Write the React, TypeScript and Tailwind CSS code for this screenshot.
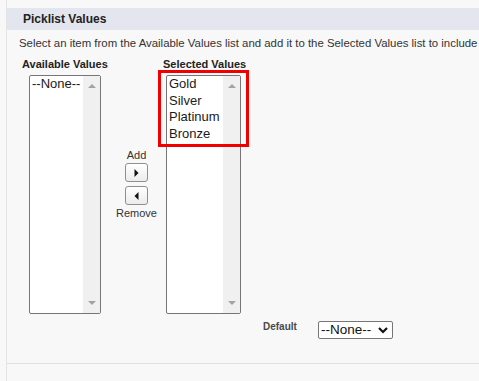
const font = { fontFamily: '"Liberation Sans", Arial, sans-serif' };

function Arrow({ dir }: { dir: "up" | "down" }) {
  return (
    <svg width="8" height="4" viewBox="0 0 8 4" className="block">
      {dir === "up" ? (
        <polygon points="0,4 8,4 4,0" fill="#a3a3a3" />
      ) : (
        <polygon points="0,0 8,0 4,4" fill="#a3a3a3" />
      )}
    </svg>
  );
}

function ListBox({ items, width }: { items: string[]; width: string }) {
  return (
    <div
      className={`flex h-[239px] ${width} overflow-hidden rounded-[2px] border border-[#767676] bg-white`}
    >
      <div className="flex-1 pl-[2px] text-[13px] leading-[16.7px] text-[#1a1a1a]">
        {items.map((it) => (
          <div key={it} className="whitespace-nowrap">
            {it}
          </div>
        ))}
      </div>
      <div className="flex w-[17px] flex-col items-center justify-between bg-[#f0f0f0] pt-[8px] pb-[8px]">
        <Arrow dir="up" />
        <Arrow dir="down" />
      </div>
    </div>
  );
}

function MoveButton({ dir }: { dir: "right" | "left" }) {
  return (
    <button className="flex h-[19px] w-[23px] items-center justify-center rounded-[3px] border border-[#8f8f8f] bg-gradient-to-b from-white to-[#ececec]">
      <svg width="5" height="8" viewBox="0 0 5 8" className="block">
        {dir === "right" ? (
          <polygon points="0.5,0 4.5,4 0.5,8" fill="#111" />
        ) : (
          <polygon points="4.5,0 0.5,4 4.5,8" fill="#111" />
        )}
      </svg>
    </button>
  );
}

export default function App() {
  return (
    <div className="h-[381px] w-[479px] overflow-hidden bg-[#f8f8f8] pl-[6px]" style={font}>
      <div className="h-full border-l border-[#e4e4e4]">
        <div className="h-[364px] border-b border-[#e0e0e0] pt-[8px]">
          <div className="flex h-[22px] items-center bg-[#e3e6ee] pl-[16px] text-[12px] font-bold text-[#222]">
            Picklist Values
          </div>
          <p className="mt-[6px] whitespace-nowrap pl-[12px] text-[11.4px] leading-[14px] text-[#333]">
            Select an item from the Available Values list and add it to the Selected Values list to include
          </p>
          <div className="mt-[7px] flex pl-[15px]">
            <div className="w-[88px]">
              <div className="mb-[4px] text-[11px] leading-[14px] font-bold text-[#222]">Available Values</div>
              <div className="ml-[7px]">
                <ListBox items={["--None--"]} width="w-[72px]" />
              </div>
            </div>
            <div className="flex w-[53px] flex-col items-center pt-[91px] text-[11px] leading-[14px] text-[#333]">
              <span>Add</span>
              <div className="mt-[1px] flex flex-col gap-[4px]">
                <MoveButton dir="right" />
                <MoveButton dir="left" />
              </div>
              <span className="mt-[1px]">Remove</span>
            </div>
            <div>
              <div className="mb-[4px] text-[11px] leading-[14px] font-bold text-[#222]">Selected Values</div>
              <div className="relative ml-[3px]">
                <ListBox items={["Gold", "Silver", "Platinum", "Bronze"]} width="w-[75px]" />
                <div className="absolute -top-[5px] -left-[8px] h-[77px] w-[91px] border-[3px] border-[#f00000]" />
              </div>
            </div>
          </div>
          <div className="mt-[7px] flex items-start pl-[256px]">
            <span className="w-[55px] text-[10px] leading-[12px] font-bold text-[#4a4a4a]">Default</span>
            <div className="flex h-[18px] w-[75px] items-center justify-between rounded-[2px] border border-[#767676] bg-white pr-[4px] pl-[2px] text-[13.5px] leading-[16px] text-[#111]">
              <span>--None--</span>
              <svg width="10" height="7" viewBox="0 0 10 7" className="block">
                <polyline points="1,1 5,5 9,1" fill="none" stroke="#111" strokeWidth="2.2" />
              </svg>
            </div>
          </div>
        </div>
      </div>
    </div>
  );
}
